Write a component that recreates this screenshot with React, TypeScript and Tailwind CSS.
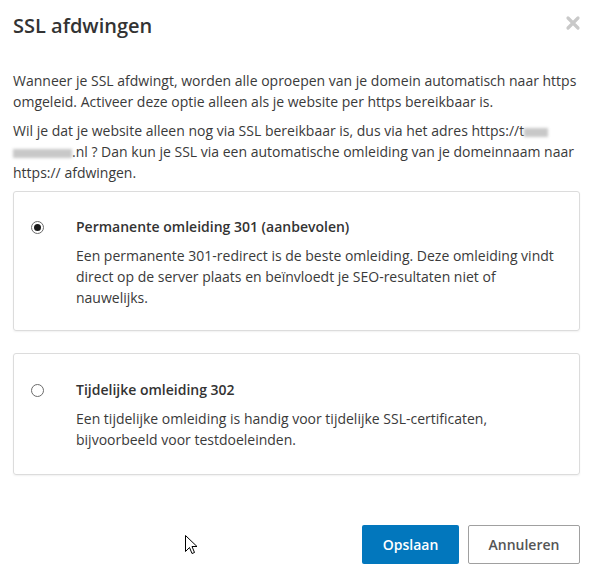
import React from "react";

function Radio({ checked }: { checked: boolean }) {
  return (
    <span className="mt-[5px] flex h-[13px] w-[13px] shrink-0 items-center justify-center rounded-full border border-[#6b6b6b] bg-white">
      {checked && <span className="h-[7px] w-[7px] rounded-full bg-[#1a1a1a]" />}
    </span>
  );
}

function Option({
  checked,
  title,
  pad,
  children,
}: {
  checked: boolean;
  title: string;
  pad: string;
  children: React.ReactNode;
}) {
  return (
    <div className={"flex rounded-[3px] border border-[#dcdcdc] px-[17px] shadow-[0_1px_2px_rgba(0,0,0,0.06)] " + pad}>
      <div className="w-[45px] shrink-0">
        <Radio checked={checked} />
      </div>
      <div>
        <div className="text-[14px] font-semibold leading-[21px] text-[#333]">{title}</div>
        <div className="mt-[8px] text-[14px] leading-[21px] text-[#3a3a3a]">{children}</div>
      </div>
    </div>
  );
}

function Blur({ w }: { w: number }) {
  return (
    <span
      className="inline-block h-[9px] align-middle bg-[#c8c8c8] blur-[1.5px]"
      style={{ width: w }}
    />
  );
}

export default function App() {
  return (
    <div
      className="relative h-[574px] w-[593px] overflow-hidden bg-white px-[13px]"
      style={{ fontFamily: '"Open Sans", "Noto Sans", sans-serif' }}
    >
      <div className="flex items-start justify-between pt-[12px]">
        <h1 className="text-[20px] font-semibold leading-[28px] text-[#333]">SSL afdwingen</h1>
        <svg className="mt-[3px] mr-[-1px]" width="16" height="16" viewBox="0 0 16 16">
          <path d="M3 3 L13 13 M13 3 L3 13" stroke="#c9c9c9" strokeWidth="3.2" strokeLinecap="round" />
        </svg>
      </div>

      <div className="mt-[30px] text-[14px] leading-[21px] text-[#3a3a3a]">
        <p>
          Wanneer je SSL afdwingt, worden alle oproepen van je domein automatisch naar https omgeleid. Activeer deze
          optie alleen als je website per https bereikbaar is.
        </p>
        <p className="mt-[8px]">
          Wil je dat je website alleen nog via SSL bereikbaar is, dus via het adres https://t
          <Blur w={24} />
          <br />
          <Blur w={59} />
          .nl ? Dan kun je SSL via een automatische omleiding van je domeinnaam naar https:// afdwingen.
        </p>
      </div>

      <div className="mt-[8px] flex flex-col gap-[22px]">
        <Option checked title="Permanente omleiding 301 (aanbevolen)" pad="pt-[24px] pb-[22px]">
          Een permanente 301-redirect is de beste omleiding. Deze omleiding vindt direct op de server plaats en
          beïnvloedt je SEO-resultaten niet of nauwelijks.
        </Option>
        <Option checked={false} title="Tijdelijke omleiding 302" pad="pt-[25px] pb-[24px]">
          Een tijdelijke omleiding is handig voor tijdelijke SSL-certificaten, bijvoorbeeld voor testdoeleinden.
        </Option>
      </div>

      <div className="mt-[50px] flex justify-end gap-[9px]">
        <button className="h-[39px] w-[97px] rounded-[2px] bg-[#0277bd] text-[14px] font-semibold text-white">
          Opslaan
        </button>
        <button className="h-[39px] w-[112px] rounded-[2px] border border-[#a0a0a0] bg-white text-[14px] font-semibold text-[#555]">
          Annuleren
        </button>
      </div>

      <svg className="absolute left-[185px] top-[535px]" width="13" height="21" viewBox="0 0 13 21">
        <path
          d="M0.5 0.5 L0.5 16.5 L4.5 12.5 L7 18.5 L9.5 17.5 L7 11.5 L12 11.5 Z"
          fill="#fff"
          stroke="#000"
          strokeWidth="1"
          strokeLinejoin="miter"
        />
      </svg>
    </div>
  );
}
